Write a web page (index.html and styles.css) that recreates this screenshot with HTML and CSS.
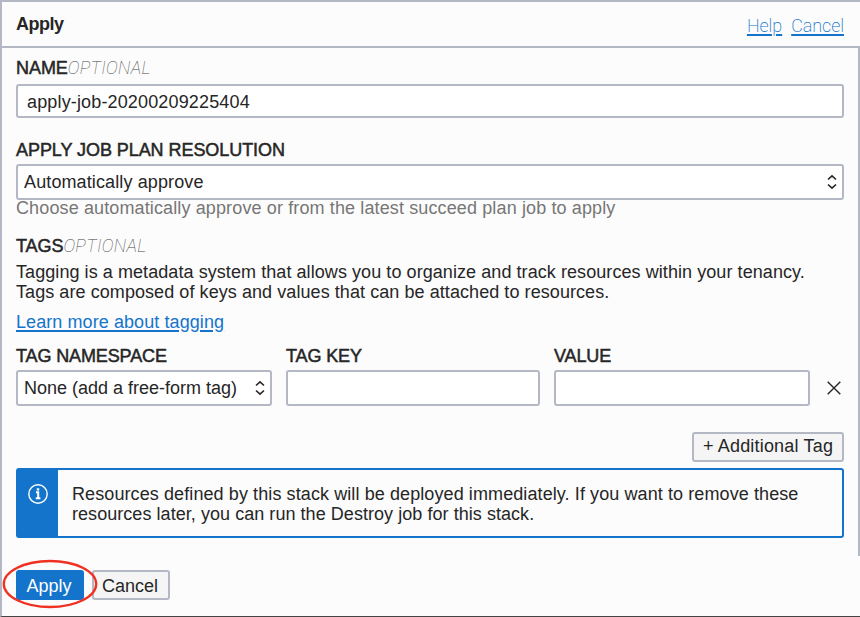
FILE: index.html
```
<!DOCTYPE html>
<html lang="en">
<head>
<meta charset="utf-8">
<title>Apply</title>
<link rel="stylesheet" href="styles.css">
</head>
<body>
<div class="dialog">
  <header class="header">
    <h1 class="title">Apply</h1>
    <nav class="links"><a class="thin-link" href="#">Help</a><a class="thin-link" href="#">Cancel</a></nav>
  </header>
  <main class="content">
    <section class="field name-field">
      <div class="label">NAME<em>OPTIONAL</em></div>
      <div class="box name-input">apply-job-20200209225404</div>
    </section>
    <section class="field plan-field">
      <div class="label">APPLY JOB PLAN RESOLUTION</div>
      <div class="box select"><span>Automatically approve</span>
        <svg class="chevrons" width="10" height="16" viewBox="0 0 10 16"><path d="M1 5.5 5 1.8l4 3.7M1 10.5l4 3.7 4-3.7"/></svg>
      </div>
      <div class="hint">Choose automatically approve or from the latest succeed plan job to apply</div>
    </section>
    <section class="tags">
      <div class="label">TAGS<em>OPTIONAL</em></div>
      <p class="description">Tagging is a metadata system that allows you to organize and track resources within your tenancy.<br>Tags are composed of keys and values that can be attached to resources.</p>
      <a class="learn" href="#">Learn more about tagging</a>
      <div class="tag-row">
        <div>
          <div class="label">TAG NAMESPACE</div>
          <div class="box select namespace"><span>None (add a free-form tag)</span>
            <svg class="chevrons" width="10" height="16" viewBox="0 0 10 16"><path d="M1 5.5 5 1.8l4 3.7M1 10.5l4 3.7 4-3.7"/></svg>
          </div>
        </div>
        <div>
          <div class="label">TAG KEY</div>
          <div class="box"></div>
        </div>
        <div>
          <div class="label">VALUE</div>
          <div class="box"></div>
        </div>
        <svg class="remove" width="14" height="14" viewBox="0 0 14 14"><path d="M.7.7l12.6 12.6M13.3.7.7 13.3"/></svg>
      </div>
      <div class="add-row"><div class="button add">+ Additional Tag</div></div>
    </section>
    <section class="info">
      <div class="info-icon">
        <svg width="20" height="20" viewBox="0 0 20 20"><circle cx="10" cy="10" r="9.2"/><path d="M8 8.2h2.2v5.8M7.8 14.2h4.6"/><rect x="8.8" y="4.3" width="2.4" height="2.2"/></svg>
      </div>
      <p class="info-text">Resources defined by this stack will be deployed immediately. If you want to remove these<br><span>resources later, you can run the Destroy job for this stack.</span></p>
    </section>
  </main>
  <footer class="footer">
    <div class="button primary">Apply
      <svg class="ring" width="96" height="50" viewBox="0 0 96 50"><ellipse cx="48" cy="25" rx="46.2" ry="23"/></svg>
    </div>
    <div class="button cancel">Cancel</div>
  </footer>
</div>
</body>
</html>
```
FILE: styles.css
```
* { box-sizing: border-box; }
body {
  margin: 0;
  background: #fcfcfc;
  color: #262626;
  font: 18px/20px "Liberation Sans", Arial, sans-serif;
  white-space: nowrap;
}
h1, p { margin: 0; }
.dialog {
  display: flex;
  flex-direction: column;
  height: 617px;
  border-top: 2px solid #b3b8c4;
  border-bottom: 1px solid #444;
  border-left: 2px solid #b3b8c4;
  overflow: hidden;
}
.header {
  display: flex;
  justify-content: space-between;
  height: 46px;
  padding: 12px 16px 0 14px;
  border-bottom: 2px solid #b3b8c4;
}
.title { font-size: 18px; line-height: 20px; letter-spacing: -.5px; }
.links { display: flex; gap: 9px; padding-top: 2px; }
.thin-link {
  font-family: Roboto, sans-serif;
  font-weight: 200;
  color: #1474cc;
  letter-spacing: -.08px;
  text-decoration-thickness: 2px;
  text-underline-offset: 2px;
}
.content {
  height: 508px;
  padding: 10px 14px 0;
  border-right: 2px solid #b3b8c4;
}
.label { height: 24px; letter-spacing: -.06px; -webkit-text-stroke: .5px #262626; }
.label em {
  font-family: Roboto, sans-serif;
  font-weight: 100;
  color: #444;
  letter-spacing: .3px;
  -webkit-text-stroke: 0;
}
.box {
  display: flex;
  height: 36px;
  border: 2px solid #b3b8c4;
  border-radius: 3px;
  background: #fff;
}
.name-field { height: 82px; }
.name-field .label { height: 26px; }
.name-input { height: 34px; padding: 6px 9px 0; letter-spacing: .15px; }
.plan-field { height: 96px; }
.select {
  align-items: center;
  justify-content: space-between;
  padding: 0 5px 0 6px;
  letter-spacing: .12px;
}
.chevrons, .remove { fill: none; stroke: #262626; stroke-width: 1.6; }
.hint { margin-top: -2px; color: #767676; letter-spacing: .125px; }
.description { margin-top: 2px; letter-spacing: .07px; }
.tags .label:first-child { height: 24px; }
.learn {
  display: block;
  width: max-content;
  margin-top: 10px;
  color: #1474cc;
  letter-spacing: .08px;
  text-decoration-thickness: 2px;
  text-underline-offset: 2px;
}
.tag-row {
  display: grid;
  grid-template-columns: 256px 254px 256px 14px;
  column-gap: 14px;
  margin-top: 14px;
}
.tag-row .label { letter-spacing: -.12px; }
.namespace { letter-spacing: 0; }
.remove { align-self: end; margin: 0 0 11px 3px; stroke-width: 1.4; }
.add-row { display: flex; justify-content: flex-end; margin-top: 26px; }
.button {
  height: 30px;
  padding: 4px 2px 0 0;
  border: 2px solid #b3b8c4;
  border-radius: 3px;
  background: #f5f5f5;
  text-align: center;
}
.add { width: 152px; padding: 2px 0 0; letter-spacing: .18px; }
.info {
  display: flex;
  height: 70px;
  margin-top: 6px;
  border: 2px solid #1474cc;
  border-radius: 3px;
}
.info-icon { width: 40px; padding: 14px 0 0 10px; background: #1474cc; }
.info-icon svg { display: block; fill: none; stroke: #fff; stroke-width: 1.4; }
.info-icon path { stroke-width: 2; }
.info-icon rect { fill: #fff; stroke: none; }
.info-text { padding: 14px 0 0 14px; letter-spacing: .095px; }
.info-text span { letter-spacing: .05px; }
.footer { display: flex; gap: 8px; padding: 14px 14px 0; }
.primary {
  position: relative;
  width: 68px;
  background: #1474cc;
  border-color: #1474cc;
  color: #fff;
}
.cancel { width: 78px; }
.ring {
  position: absolute;
  left: -16px;
  top: -13px;
  fill: none;
  stroke: #f03020;
  stroke-width: 2.3;
}
```
